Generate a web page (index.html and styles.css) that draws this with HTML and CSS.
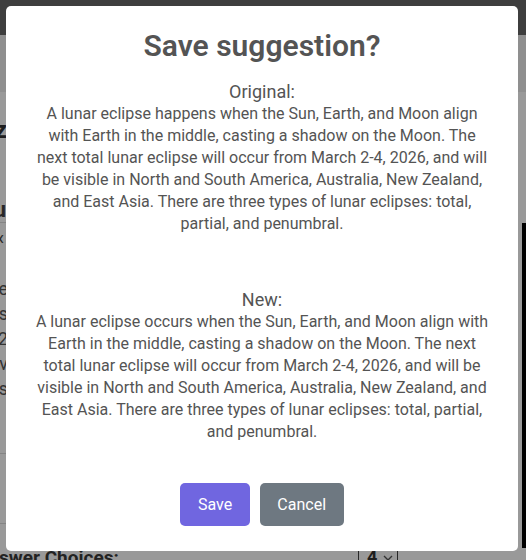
FILE: index.html
```html
<!DOCTYPE html>
<html lang="en">
<head>
<meta charset="utf-8">
<title>Save suggestion?</title>
<link rel="stylesheet" href="styles.css">
</head>
<body>
<div class="page">
  <header class="topbar"></header>
  <div class="band"></div>
  <main class="main">
    <div class="side">
      <div class="clip heading-a"><span>Quiz</span></div>
      <div class="clip heading-b"><span>Menu</span></div>
      <div class="rule"></div>
      <div class="clip back"><span>&lsaquo;</span></div>
      <div class="para">
        <div class="clip"><span>the</span></div>
        <div class="clip"><span>is</span></div>
        <div class="clip"><span>2</span></div>
        <div class="clip"><span>v</span></div>
        <div class="clip"><span>tes</span></div>
      </div>
      <div class="rule rule-low"></div>
      <div class="rule rule-bottom"></div>
    </div>
    <div class="right-panel"></div>
  </main>
  <div class="answer-row">
    <span class="answer-label">swer Choices:</span>
    <span class="select">4 <svg class="chev" width="10" height="8" viewBox="0 0 10 8"><path d="M1 2 L5 6 L9 2" fill="none" stroke="currentColor" stroke-width="1.4"/></svg></span>
  </div>
</div>

<div class="overlay">
  <div class="popup" role="dialog" aria-modal="true">
    <h2 class="title">Save suggestion?</h2>
    <div class="html-container">
      <div class="block">
        <div class="label">Original:</div>
        <div class="body-text">A lunar eclipse happens when the Sun, Earth, and Moon align with Earth in the middle, casting a shadow on the Moon. The next total lunar eclipse will occur from March 2-4, 2026, and will be visible in North and South America, Australia, New Zealand, and East Asia. There are three types of lunar eclipses: total, partial, and penumbral.</div>
      </div>
      <div class="block block-new">
        <div class="label">New:</div>
        <div class="body-text">A lunar eclipse occurs when the Sun, Earth, and Moon align with Earth in the middle, casting a shadow on the Moon. The next total lunar eclipse will occur from March 2-4, 2026, and will be visible in North and South America, Australia, New Zealand, and East Asia. There are three types of lunar eclipses: total, partial, and penumbral.</div>
      </div>
    </div>
    <div class="actions">
      <button class="btn btn-confirm" type="button">Save</button>
      <button class="btn btn-cancel" type="button">Cancel</button>
    </div>
  </div>
</div>
</body>
</html>
```

FILE: styles.css
```css
* { box-sizing: border-box; }
html, body { margin: 0; padding: 0; }
body {
  width: 526px;
  height: 560px;
  overflow: hidden;
  font-family: Roboto, "Liberation Sans", Arial, sans-serif;
  background: #ffffff;
}

/* ---------- page behind the dialog ---------- */
.page {
  width: 526px;
  height: 560px;
  display: flex;
  flex-direction: column;
  background: #ffffff;
}
.topbar { height: 35px; background: #686868; }
.band { height: 57px; background: #eeeeee; }
.main {
  height: 450px;
  display: flex;
  justify-content: space-between;
}
.side {
  width: 12px;
  display: flex;
  flex-direction: column;
}
.clip {
  display: flex;
  justify-content: flex-end;
  width: 8px;
  overflow: hidden;
  white-space: nowrap;
  color: #555;
}
.heading-a {
  margin-top: 26px;
  height: 24px;
  line-height: 24px;
  font-size: 24px;
  font-weight: 700;
  color: #333;
  width: 7px;
}
.heading-b {
  margin-top: 56px;
  height: 24px;
  line-height: 24px;
  font-size: 22px;
  font-weight: 700;
  color: #444;
  width: 6px;
}
.rule { height: 1px; background: #dddddd; width: 12px; }
.back {
  margin-top: 5px;
  height: 20px;
  line-height: 20px;
  font-size: 20px;
  width: 4px;
  color: #444;
}
.para {
  margin-top: 28px;
  display: flex;
  flex-direction: column;
  font-size: 18px;
  line-height: 25px;
}
.rule-low { margin-top: 52px; }
.rule-bottom { margin-top: 69px; }
.right-panel {
  width: 4px;
  margin-top: 131px;
  height: 325px;
  background: #000;
}
.answer-row {
  height: 18px;
  display: flex;
  align-items: flex-start;
  overflow: hidden;
}
.answer-label {
  font-size: 19px;
  font-weight: 700;
  color: #3a3a3a;
  line-height: 24px;
  margin-top: 4px;
  margin-left: -1px;
  width: 359px;
}
.select {
  width: 40px;
  height: 24px;
  border: 1px solid #444;
  border-radius: 3px;
  display: flex;
  align-items: flex-start;
  gap: 6px;
  padding: 3px 0 0 8px;
  font-size: 18px;
  font-weight: 700;
  color: #333;
}
.chev { margin-top: 8px; color: #555; }

/* ---------- dialog ---------- */
.overlay {
  position: fixed;
  inset: 0;
  background: rgba(0, 0, 0, 0.4);
  display: flex;
  justify-content: flex-start;
  align-items: flex-start;
  padding: 6px 0 0 6px;
}
.popup {
  width: 512px;
  background: #fff;
  border-radius: 5px;
  padding: 0 0 20px;
  color: #545454;
  display: flex;
  flex-direction: column;
  align-items: center;
  text-align: center;
}
.title {
  margin: 0;
  padding: 22px 16px 0;
  font-size: 30px;
  line-height: 35px;
  font-weight: 600;
  color: #545454;
}
.html-container {
  margin: 18px 28.8px 5px;
  font-size: 16px;
  line-height: 22px;
  font-weight: 400;
  color: #545454;
}
.label { font-size: 18px; line-height: 22px; }
.body-text { font-size: 16px; line-height: 22px; }
.block-new { margin-top: 54px; }
.actions {
  margin-top: 30px;
  display: flex;
  justify-content: center;
}
.btn {
  margin: 5px;
  padding: 12px 17.6px;
  border: 0;
  border-radius: 5px;
  font-family: Roboto, "Liberation Sans", Arial, sans-serif;
  font-size: 16px;
  line-height: 19px;
  font-weight: 400;
  color: #fff;
}
.btn-confirm { background: #7066e0; }
.btn-cancel { background: #6e7881; }
```
